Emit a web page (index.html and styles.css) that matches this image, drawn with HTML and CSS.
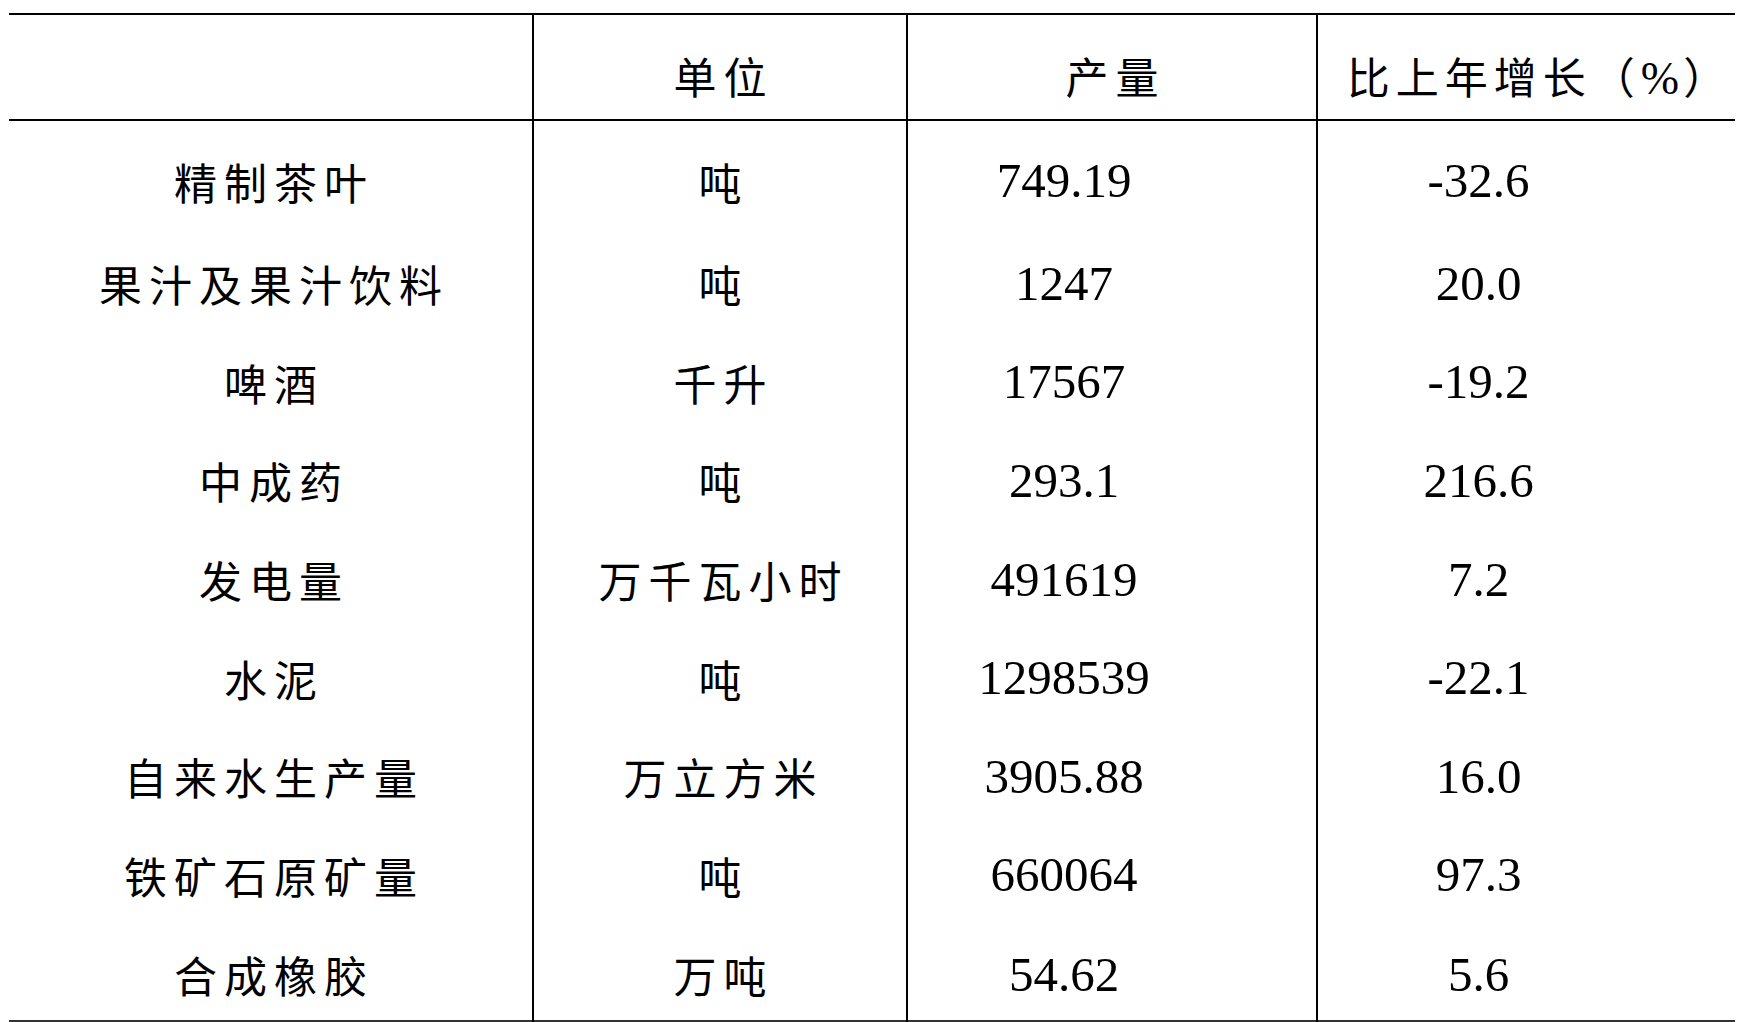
FILE: index.html
```html
<!DOCTYPE html>
<html lang="zh-CN">
<head>
<meta charset="utf-8">
<title>主要工业产品产量</title>
<link rel="stylesheet" href="styles.css">
</head>
<body>
<table class="stats">
  <colgroup>
    <col class="c-name">
    <col class="c-unit">
    <col class="c-qty">
    <col class="c-growth">
  </colgroup>
  <thead>
    <tr class="head">
      <th class="zh"></th>
      <th class="zh">单位</th>
      <th class="zh">产量</th>
      <th class="zh growth-head">比上年增长（<span class="pct">%</span>）</th>
    </tr>
  </thead>
  <tbody>
    <tr class="row first"><td class="zh">精制茶叶</td><td class="zh">吨</td><td class="num">749.19</td><td class="num">-32.6</td></tr>
    <tr class="row"><td class="zh">果汁及果汁饮料</td><td class="zh">吨</td><td class="num">1247</td><td class="num">20.0</td></tr>
    <tr class="row"><td class="zh">啤酒</td><td class="zh">千升</td><td class="num">17567</td><td class="num">-19.2</td></tr>
    <tr class="row"><td class="zh">中成药</td><td class="zh">吨</td><td class="num">293.1</td><td class="num">216.6</td></tr>
    <tr class="row"><td class="zh">发电量</td><td class="zh">万千瓦小时</td><td class="num">491619</td><td class="num">7.2</td></tr>
    <tr class="row"><td class="zh">水泥</td><td class="zh">吨</td><td class="num">1298539</td><td class="num">-22.1</td></tr>
    <tr class="row"><td class="zh">自来水生产量</td><td class="zh">万立方米</td><td class="num">3905.88</td><td class="num">16.0</td></tr>
    <tr class="row"><td class="zh">铁矿石原矿量</td><td class="zh">吨</td><td class="num">660064</td><td class="num">97.3</td></tr>
    <tr class="row last"><td class="zh">合成橡胶</td><td class="zh">万吨</td><td class="num">54.62</td><td class="num">5.6</td></tr>
  </tbody>
</table>
</body>
</html>
```
FILE: styles.css
```css
html, body {
  margin: 0;
  padding: 0;
  background: #ffffff;
}

body {
  padding: 13px 0 0 9px;
  color: #000000;
  overflow: hidden;
}

.stats {
  border-collapse: collapse;
  table-layout: fixed;
  width: 1726px;
  border-top: 2px solid #000000;
  border-bottom: 2px solid #333333;
}

.c-name { width: 524px; }
.c-unit { width: 374px; }
.c-qty { width: 410px; }
.c-growth { width: 418px; }

.stats th,
.stats td {
  padding: 0;
  text-align: center;
  vertical-align: middle;
  border-left: 2px solid #000000;
  font-weight: normal;
  white-space: nowrap;
}

.stats th:first-child,
.stats td:first-child {
  border-left: none;
}

.stats .head th {
  height: 106px;
  padding-top: 16px;
  box-sizing: border-box;
  border-bottom: 2px solid #000000;
}

.zh {
  font-family: "Noto Sans CJK SC", "Noto Sans CJK TC", sans-serif;
  font-weight: 300;
  font-size: 43px;
  letter-spacing: 7px;
  text-indent: 7px;
}

.stats .head th.growth-head {
  padding-left: 26px;
  letter-spacing: 6px;
  text-indent: 0;
}

.pct {
  font-family: "Liberation Serif", "Times New Roman", serif;
  font-size: 46px;
  letter-spacing: 4px;
}

.stats td.num {
  font-family: "Liberation Serif", "Times New Roman", serif;
  font-size: 49px;
  padding-right: 96px;
}

.stats .row td {
  height: 98.6px;
  box-sizing: border-box;
}

.stats .row.first td {
  height: 114px;
  padding-top: 6px;
}

.stats .row.last td {
  height: 97px;
  padding-top: 4px;
}
```
